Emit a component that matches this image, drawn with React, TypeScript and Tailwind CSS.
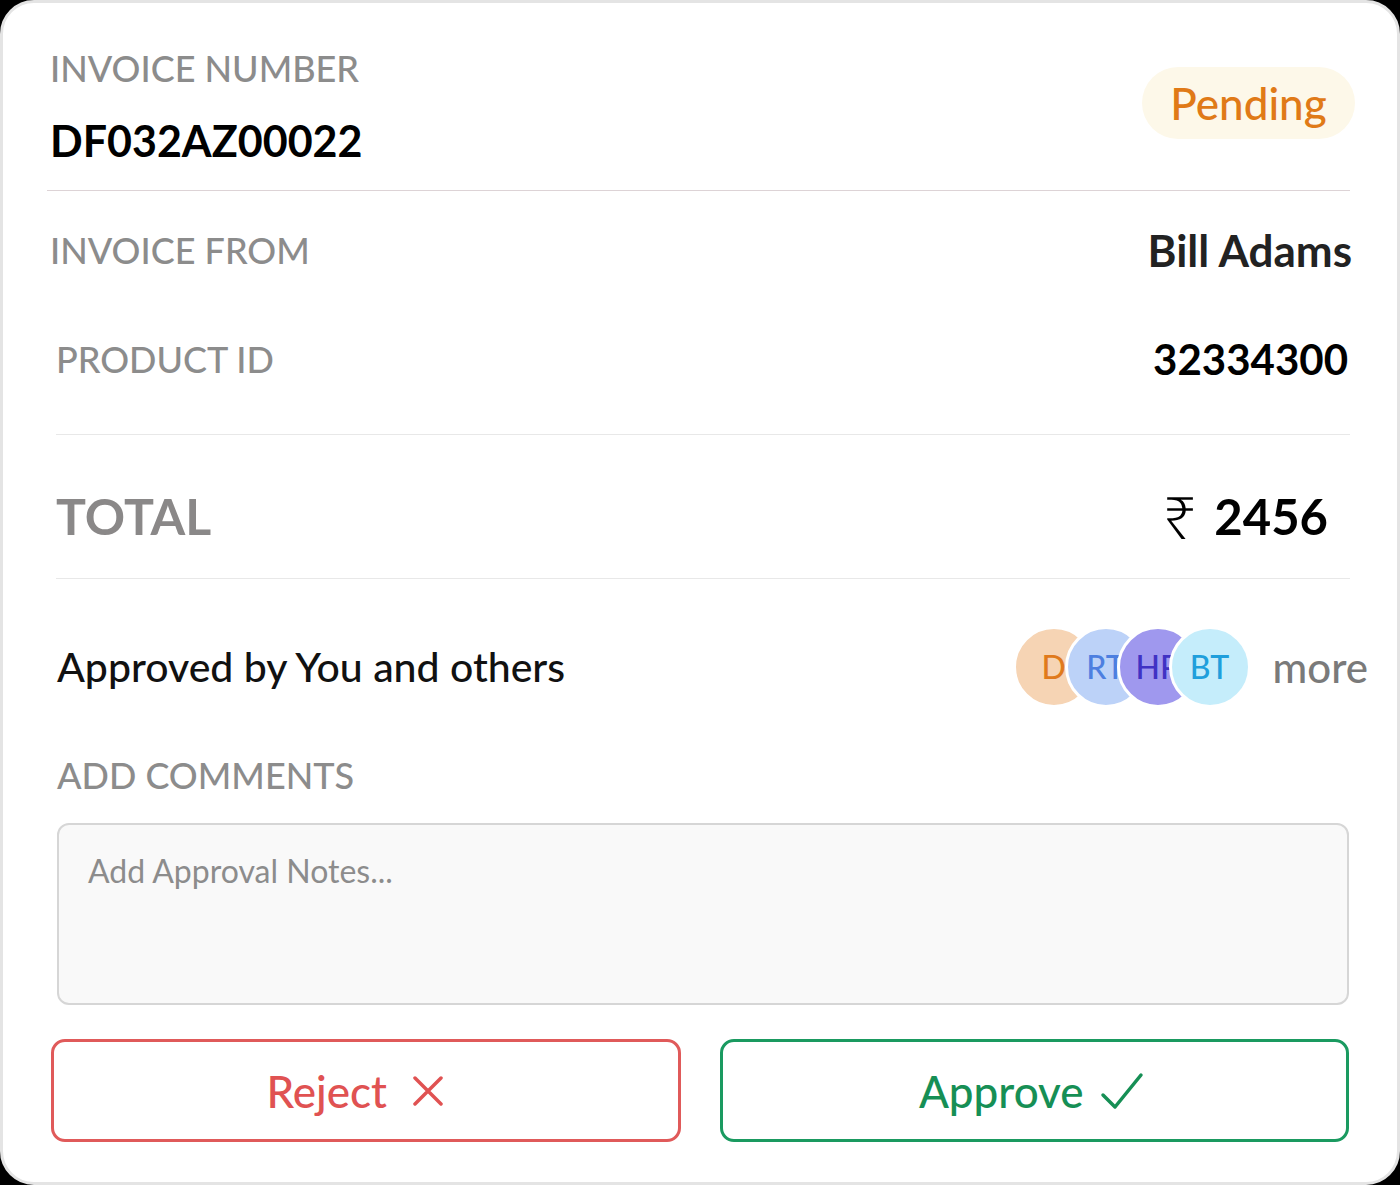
import React from 'react';

const font = { fontFamily: 'Lato, "Noto Sans", sans-serif' };

const avatars = [
  { initials: 'D', bg: 'bg-[#f6d4b4]', text: 'text-[#e07a1c]' },
  { initials: 'RT', bg: 'bg-[#bcd2f8]', text: 'text-[#4d7fe0]' },
  { initials: 'HP', bg: 'bg-[#9f98ee]', text: 'text-[#4032c4]' },
  { initials: 'BT', bg: 'bg-[#c5edfb]', text: 'text-[#1f9fdc]' },
];

const Divider = ({ className = '' }: { className?: string }) => (
  <div className={`h-px ${className}`} />
);

export default function App() {
  return (
    <div className="w-[1400px] h-[1185px] bg-black" style={font}>
      <div className="h-full rounded-[34px] border-[3px] border-[#e4e4e4] bg-white pl-[44px] pr-[47px] flex flex-col">
        {/* header */}
        <div className="flex justify-between items-start pt-[43px] pl-[3px]">
          <div className="flex flex-col">
            <span className="text-[36px] leading-[44px] text-[#8c8c8c] font-medium">INVOICE NUMBER</span>
            <span className="mt-[25px] text-[43px] leading-[52px] text-black font-bold">DF032AZ00022</span>
          </div>
          <div className="mt-[21px] -mr-[5px] w-[213px] h-[72px] rounded-full bg-[#fdf8e9] flex items-center justify-center">
            <span className="text-[44px] text-[#e07a17] font-medium">Pending</span>
          </div>
        </div>
        <Divider className="mt-[23px] bg-[#ddd3d6]" />

        <div className="h-[118px] flex items-center justify-between pl-[3px] -mr-[2px]">
          <span className="text-[36px] text-[#8c8c8c] font-medium">INVOICE FROM</span>
          <span className="text-[44px] text-[#222] font-bold">Bill Adams</span>
        </div>
        <div className="h-[100px] flex items-center justify-between pl-[9px] pr-[2px]">
          <span className="text-[36px] text-[#8c8c8c] font-medium">PRODUCT ID</span>
          <span className="text-[42px] text-black font-bold">32334300</span>
        </div>
        <Divider className="mt-[25px] ml-[9px] bg-[#e8e8e8]" />

        <div className="h-[143px] pt-[20px] flex items-center justify-between pl-[9px] pr-[22px]">
          <span className="text-[50px] text-[#8a8888] font-bold">TOTAL</span>
          <span className="flex items-center text-black">
            <span className="text-[58px] leading-none font-light" style={{ fontFamily: '"Noto Sans", sans-serif' }}>₹</span>
            <span className="ml-[18px] text-[49px] font-bold">2456</span>
          </span>
        </div>
        <Divider className="ml-[9px] bg-[#e8e8e8]" />

        <div className="h-[176px] flex items-center justify-between pl-[10px] -mr-[18px]">
          <span className="text-[41px] text-[#111] font-medium">Approved by You and others</span>
          <div className="flex items-center">
            <div className="flex items-center">
              {avatars.map((a, i) => (
                <div
                  key={a.initials}
                  className={`w-[82px] h-[82px] rounded-full border-[3px] border-white ${a.bg} flex items-center justify-center overflow-hidden ${i > 0 ? '-ml-[30px]' : ''}`}
                >
                  <span className={`text-[32px] font-medium ${a.text}`}>{a.initials}</span>
                </div>
              ))}
            </div>
            <span className="ml-[22px] text-[42px] text-[#7a7a7a] font-medium">more</span>
          </div>
        </div>

        <div className="h-[40px] flex items-center pl-[10px]">
          <span className="text-[36px] text-[#8c8c8c] font-medium">ADD COMMENTS</span>
        </div>

        <textarea
          placeholder="Add Approval Notes..."
          className="mt-[28px] ml-[10px] mr-[1px] h-[182px] resize-none rounded-[12px] border-2 border-[#d6d6d6] bg-[#f9f9f9] pl-[29px] pr-[30px] pt-[22px] text-[32px] text-[#333] placeholder:text-[#8c8c8c] outline-none"
          style={font}
        />

        <div className="mt-[34px] ml-[4px] mr-[1px] grid grid-cols-2 gap-[39px]">
          <button className="h-[103px] pr-[22px] rounded-[14px] border-[3px] border-[#e05a5a] flex items-center justify-center text-[#e05252]">
            <span className="text-[44px] font-medium">Reject</span>
            <svg className="ml-[26px]" width="30" height="30" viewBox="0 0 30 30" fill="none" stroke="currentColor" strokeWidth="3.5" strokeLinecap="round">
              <path d="M2 2 L28 28 M28 2 L2 28" />
            </svg>
          </button>
          <button className="h-[103px] pr-[6px] rounded-[14px] border-[3px] border-[#1a9a60] flex items-center justify-center text-[#168f55]">
            <span className="text-[44px] font-medium">Approve</span>
            <svg className="ml-[16px]" width="44" height="40" viewBox="0 0 44 40" fill="none" stroke="currentColor" strokeWidth="3.5" strokeLinecap="round" strokeLinejoin="round">
              <path d="M3 24 L15 36 L41 4" />
            </svg>
          </button>
        </div>
      </div>
    </div>
  );
}
